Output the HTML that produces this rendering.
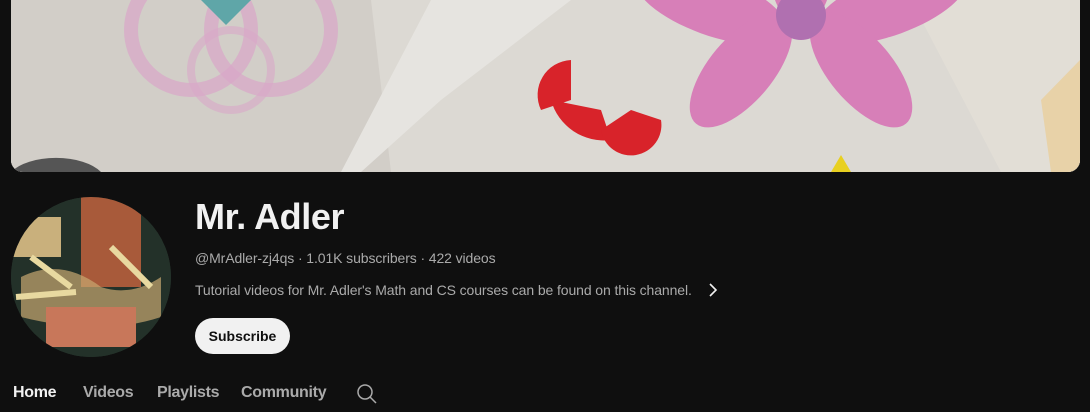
<!DOCTYPE html>
<html><head><style>
body{margin:0;width:1090px;height:412px;background:#0f0f0f;overflow:hidden;font-family:"Liberation Sans",sans-serif;position:relative}
.banner{position:absolute;left:11px;top:0;width:1069px;height:172px;border-radius:0 0 12px 12px;overflow:hidden;background:#d9d6d1}
.av{position:absolute;left:11px;top:197px;width:160px;height:160px;border-radius:50%;overflow:hidden;background:#2a3a30}
.t{position:absolute;white-space:nowrap}
.tab{font-size:16px;font-weight:bold;letter-spacing:-0.3px}
</style></head><body>
<div class="banner">
<svg width="1069" height="172" viewBox="0 0 1069 172">
<rect width="1069" height="172" fill="#dcd9d3"/>
<polygon points="0,0 360,0 380,172 0,172" fill="#d2cec8"/>
<polygon points="420,0 560,0 430,100 350,172 330,172" fill="#e6e4e0"/>
<polygon points="900,0 1069,0 1069,172 990,172" fill="#e2ded6"/>
<polygon points="1030,100 1069,60 1069,172 1040,172" fill="#e8d2a8"/>
<circle cx="180" cy="30" r="60" fill="none" stroke="#d9a6c8" stroke-width="14" opacity=".7"/>
<circle cx="260" cy="30" r="60" fill="none" stroke="#d9a6c8" stroke-width="14" opacity=".7"/>
<circle cx="220" cy="70" r="40" fill="none" stroke="#d8a8c8" stroke-width="8" opacity=".6"/>
<polygon points="190,0 240,0 215,25" fill="#5fa6a8"/>
<path d="M560,60 a35,35 0 0 0 -30,50 l30,-10 z" fill="#d8232a"/>
<path d="M540,100 a55,55 0 0 0 60,40 l-10,-30 z" fill="#d8232a"/>
<path d="M590,130 a30,30 0 0 0 60,-10 l-30,-10 z" fill="#d8232a"/>
<g transform="translate(790,15)" fill="#d77fb8">
<ellipse cx="0" cy="-40" rx="30" ry="50"/>
<ellipse cx="-90" cy="-10" rx="80" ry="30" transform="rotate(20,-90,-10)"/>
<ellipse cx="90" cy="-10" rx="80" ry="30" transform="rotate(-20,90,-10)"/>
<ellipse cx="-60" cy="55" rx="32" ry="70" transform="rotate(40,-60,55)"/>
<ellipse cx="60" cy="55" rx="32" ry="70" transform="rotate(-40,60,55)"/>
<circle cx="0" cy="0" r="25" fill="#b070b0"/>
</g>
<polygon points="820,172 830,155 840,172" fill="#e8d020"/>
<path d="M0,172 a50,25 0 0 1 90,0z" fill="#555"/>
</svg>
</div>
<div class="av">
<svg width="160" height="160">
<rect width="160" height="160" fill="#233129"/>
<rect x="70" y="0" width="60" height="90" fill="#a85a3a"/>
<rect x="0" y="20" width="50" height="40" fill="#c9b07c"/>
<path d="M10,80 q40,-20 80,10 q30,10 60,-10 l0,40 q-60,20 -140,0z" fill="#c8a870" opacity=".7"/>
<rect x="35" y="110" width="90" height="40" fill="#c8775a"/>
<path d="M20,60 l40,30 M100,50 l40,40 M5,100 l60,-5" stroke="#e8d9a0" stroke-width="6"/>
</svg>
</div>
<div class="t" style="left:195px;top:196px;font-size:36px;font-weight:bold;color:#f1f1f1;letter-spacing:-0.4px">Mr. Adler</div>
<div class="t" style="left:195px;top:250px;font-size:14px;color:#aaa;letter-spacing:-0.1px">@MrAdler-zj4qs · 1.01K subscribers · 422 videos</div>
<div class="t" style="left:195px;top:282px;font-size:14px;color:#aaa;letter-spacing:-0.1px">Tutorial videos for Mr. Adler's Math and CS courses can be found on this channel.</div>
<svg class="t" style="left:706px;top:282px" width="14" height="16"><path d="M4,2 l6,6 -6,6" fill="none" stroke="#f1f1f1" stroke-width="1.6"/></svg>
<div class="t" style="left:195px;top:318px;width:95px;height:36px;border-radius:18px;background:#f1f1f1;color:#0f0f0f;font-size:14px;font-weight:bold;text-align:center;line-height:36px">Subscribe</div>
<div class="t tab" style="left:13px;top:384px;color:#f1f1f1">Home</div>
<div class="t tab" style="left:83px;top:384px;color:#aaa">Videos</div>
<div class="t tab" style="left:157px;top:384px;color:#aaa">Playlists</div>
<div class="t tab" style="left:241px;top:384px;color:#aaa">Community</div>
<svg class="t" style="left:356px;top:383px" width="22" height="22"><circle cx="9" cy="9" r="7" fill="none" stroke="#aaa" stroke-width="1.5"/><path d="M14,14 l6,6" stroke="#aaa" stroke-width="1.5"/></svg>
</body></html>
